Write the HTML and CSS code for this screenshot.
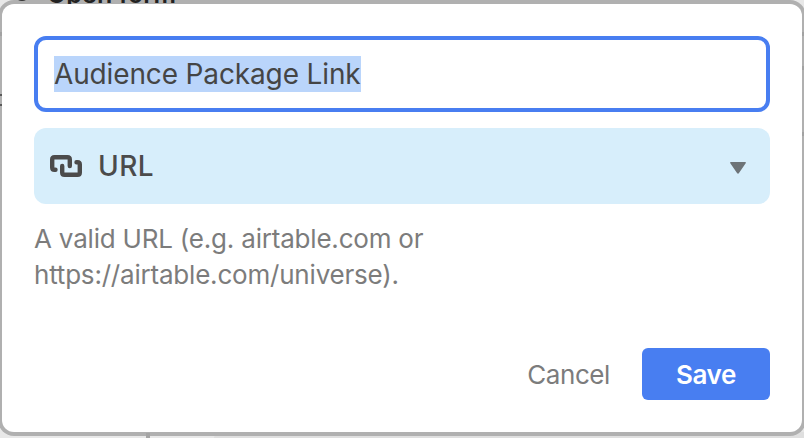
FILE: index.html
```html
<!DOCTYPE html>
<html lang="en">
<head>
    <meta charset="UTF-8">
    <meta name="viewport" content="width=device-width, initial-scale=1.0">
    <title>Edit field</title>
    <link rel="stylesheet" href="styles.css">
</head>
<body>
    <!-- page behind the dialog -->
    <div class="toolbar"><span class="dot"></span>Open form</div>
    <div class="divider"></div>
    <div class="tab"></div>

    <div class="dialog">
        <div class="name"><span class="selected">Audience Package Link</span></div>
        <div class="type">
            <svg class="link" width="32" height="22" viewBox="0 0 32 22" fill="none" stroke="#4b4b4b" stroke-width="4.4" stroke-linecap="round" stroke-linejoin="round">
                <path d="M5.500 14.800H4.500Q2.200 14.800 2.200 12.500V4.500Q2.200 2.200 4.500 2.200H17.500Q19.800 2.200 19.800 4.500V11"/>
                <path d="M26.500 7.200H27.500Q29.800 7.200 29.800 9.500V17.500Q29.800 19.800 27.500 19.800H14.500Q12.200 19.800 12.200 17.500V11"/>
            </svg>
            <span class="label">URL</span>
            <svg class="arrow" width="18" height="14" viewBox="0 0 18 14">
                <path d="M2 1H16Q17.500 1 16.700 2.300L10 12Q9 13.500 8 12L1.300 2.300Q.5 1 2 1Z" fill="#6d7377"/>
            </svg>
        </div>
        <p class="help">A valid URL (e.g. airtable.com or<br>https://airtable.com/universe).</p>
        <div class="actions">
            <button class="cancel">Cancel</button>
            <button class="save">Save</button>
        </div>
    </div>
    <div class="edge left"></div>
    <div class="edge right"></div>
</body>
</html>
```

FILE: styles.css
```css
*{
    margin: 0;
    padding: 0;
    box-sizing: border-box;
}
body{
    position: relative;
    height: 438px;
    overflow: hidden;
    background-color: #e8e8e8;
    font-family: Inter, "Liberation Sans", sans-serif;
}
.toolbar{
    position: absolute;
    z-index: 1;
    left: 0;
    top: -20px;
    height: 24px;
    padding-left: 47px;
    overflow: hidden;
    font-size: 25px;
    line-height: 28px;
    font-weight: 600;
    letter-spacing: 0.1px;
    color: #222;
}
.dot{
    position: absolute;
    left: 14px;
    top: 5px;
    width: 16px;
    height: 16px;
    border-radius: 50%;
    background-color: #333;
}
.divider{
    position: absolute;
    z-index: 1;
    left: 146px;
    bottom: 0;
    width: 4px;
    height: 5px;
    background-color: #a5a5a5;
}
.tab{
    position: absolute;
    left: 214px;
    right: 0;
    bottom: 0;
    height: 6px;
    border-top-left-radius: 6px;
    background-color: #dfdfdf;
}
.dialog{
    position: relative;
    width: 800px;
    height: 428px;
    margin: 4px 2px;
    padding: 32px;
    border-radius: 12px;
    background-color: white;
    box-shadow: 0 0 0 4px #b0b0b0;
}
/* rows of the page that show through the dialog's rim */
.edge{
    position: absolute;
    top: 32px;
    width: 2px;
    height: 104px;
}
.left{
    left: 0;
    background: linear-gradient(#a2a2a2 4px, transparent 4px 62px, #5a5a5a 62px 64px, transparent 64px 72px, #5a5a5a 72px 74px, transparent 74px);
}
.right{
    right: 0;
    background: linear-gradient(#a2a2a2 4px, transparent 4px 34px, #a2a2a2 34px 38px, transparent 38px 100px, #a2a2a2 100px);
}
.name{
    display: flex;
    align-items: center;
    height: 76px;
    padding-left: 16px;
    border: 4px solid #487ef1;
    border-radius: 12px;
}
.selected{
    height: 36px;
    line-height: 36px;
    font-size: 28px;
    letter-spacing: -0.14px;
    white-space: nowrap;
    color: #454545;
    background-color: #bad5fb;
}
.type{
    display: flex;
    align-items: center;
    height: 76px;
    margin-top: 16px;
    padding: 0 23px 0 16px;
    border-radius: 12px;
    background-color: #d7eefb;
}
.label{
    margin-left: 16px;
    font-size: 28px;
    font-weight: 500;
    letter-spacing: 0.4px;
    color: #4b4b4b;
}
.arrow{
    margin-left: auto;
    margin-top: 3px;
}
.help{
    margin-top: 17px;
    font-size: 26px;
    line-height: 36px;
    letter-spacing: -0.2px;
    color: #7c7c7c;
}
.actions{
    display: flex;
    justify-content: flex-end;
    gap: 32px;
    margin-top: 55px;
}
button{
    height: 52px;
    border: none;
    background: none;
    font-family: inherit;
    font-size: 26px;
    letter-spacing: -0.4px;
    color: #7c7c7c;
}
.save{
    width: 128px;
    border-radius: 6px;
    background-color: #487ef1;
    font-weight: 600;
    color: white;
}
```
